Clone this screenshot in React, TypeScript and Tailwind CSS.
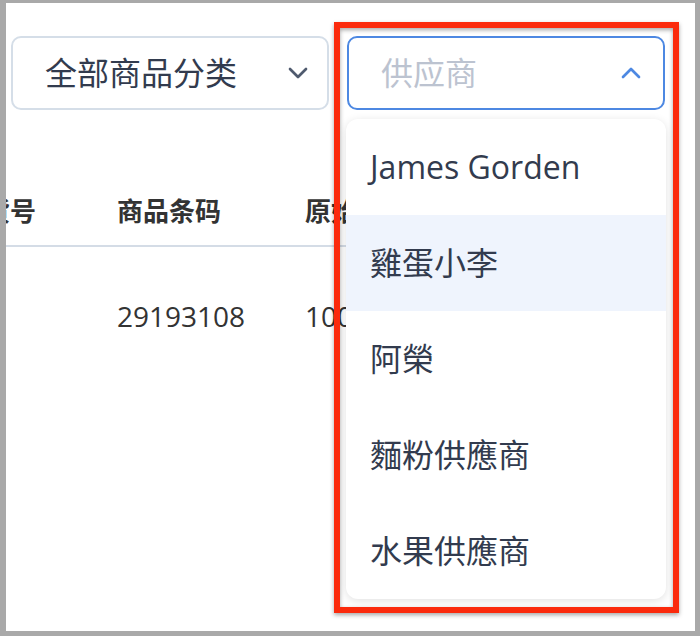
import { ChevronDown, ChevronUp } from "lucide-react";

const suppliers = ["James Gorden", "雞蛋小李", "阿榮", "麵粉供應商", "水果供應商"];

const App = () => {
  return (
    <div className="relative h-[636px] w-[700px] bg-[#a9a9a9] pt-[3px] pl-[6px] pr-[5px] pb-[5px] font-['Open_Sans','Noto_Sans_CJK_SC',sans-serif]">
      <div className="relative h-full w-full overflow-hidden bg-white">
        {/* filters */}
        <div className="flex gap-[18px] pl-[5px] pt-[33px]">
          <div className="flex h-[74px] w-[318px] items-center justify-between rounded-[10px] border-2 border-[#d5dee8] pl-[32px] pr-[13px]">
            <span className="text-[32px] leading-none text-[#323b4e]">全部商品分类</span>
            <ChevronDown size={32} strokeWidth={2} className="text-[#4f5a6e]" />
          </div>
          <div className="flex h-[74px] w-[318px] items-center justify-between rounded-[10px] border-2 border-[#4d88e2] pl-[32px] pr-[16px]">
            <span className="text-[32px] leading-none text-[#bcc3d0]">供应商</span>
            <ChevronUp size={32} strokeWidth={2} className="text-[#4d88e2]" />
          </div>
        </div>

        {/* table, scrolled to the right */}
        <div className="ml-[-22px] mt-[67px] w-[620px]">
          <div className="flex h-[70px] items-center border-b-2 border-[#d4dce6] text-[26px] font-semibold text-[#333333]">
            <div className="w-[133px]">货号</div>
            <div className="w-[188px]">商品条码</div>
            <div className="w-[188px]">原始价格</div>
          </div>
          <div className="flex h-[138px] items-center text-[28px] text-[#333333]">
            <div className="w-[133px]"></div>
            <div className="w-[188px]">29193108</div>
            <div className="w-[188px]">100.00</div>
          </div>
        </div>

        {/* supplier dropdown */}
        <div className="absolute left-[340px] top-[116px] w-[320px] overflow-hidden rounded-[12px] bg-white shadow-[0_2px_10px_rgba(0,0,0,0.12)]">
          {suppliers.map((name) => (
            <div
              key={name}
              className={`flex h-[96px] items-center pl-[24px] text-[32px] text-[#323b4e] ${name === "雞蛋小李" ? "bg-[#eff4fd]" : ""}`}
            >
              {name}
            </div>
          ))}
        </div>
      </div>

      {/* annotation */}
      <div className="absolute left-[334px] top-[22px] h-[591px] w-[345px] border-[6px] border-[#fb2a0c] drop-shadow-[0_2px_2px_rgba(0,0,0,0.35)]"></div>
    </div>
  );
};

export default App;
